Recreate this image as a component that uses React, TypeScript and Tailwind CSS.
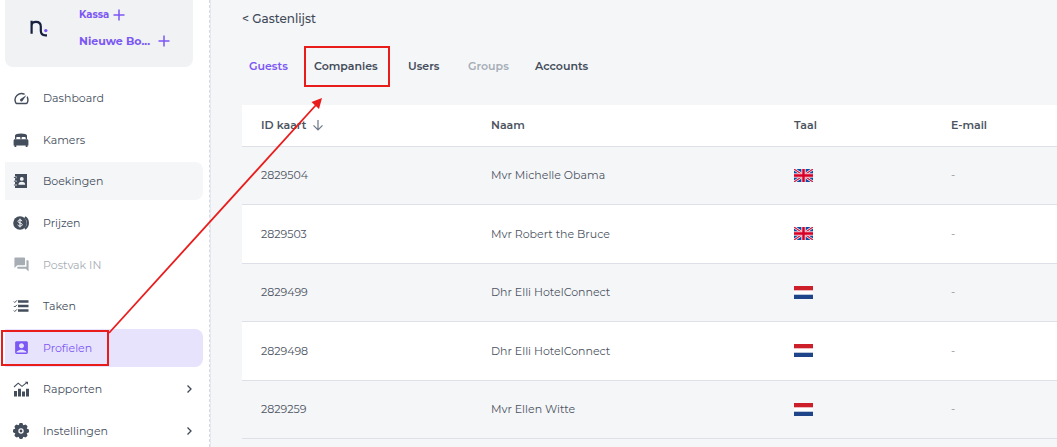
import type { ReactNode } from "react";
import clsx from "clsx";
import { MdAccountBox, MdQuestionAnswer, MdSpeed } from "react-icons/md";

const BedIcon = () => (
  <svg viewBox="0 0 16 16" className="size-4" fill="currentColor" aria-hidden="true">
    <path d="M2 7.300V3.500C2 2.200 4.600 1.500 8 1.500s6 .7 6 2v3.800h-1.300V6c0-.6-.4-1-1-1H9.600c-.6 0-1 .4-1 1v1.300H7.400V6c0-.6-.4-1-1-1H4.300c-.6 0-1 .4-1 1v1.300z" />
    <path d="M2 7.300h12c.8 0 1.400.6 1.400 1.400v4.800h-.9V15h-1.800v-1.500H3.300V15H1.500v-1.500H.6V8.700c0-.8.6-1.400 1.400-1.400z" />
  </svg>
);

const ContactsIcon = () => (
  <svg viewBox="0 0 16 16" className="size-4" fill="currentColor" aria-hidden="true">
    <path
      fillRule="evenodd"
      d="M2 1h12v14H2v-2.200h1.200a.8.8 0 0 0 0-1.600H2V9h1.200a.8.8 0 0 0 0-1.600H2V5.200h1.200a.8.8 0 0 0 0-1.600H2zM8.800 4a1.900 1.900 0 1 0 0 3.800a1.900 1.900 0 0 0 0-3.800zM5.500 11.800h6.600v-.8c0-1.500-2-2.200-3.300-2.200s-3.300.7-3.300 2.200z"
    />
    <path
      d="M1.300 4.400h1.900M1.300 8.200h1.900M1.300 12h1.900"
      stroke="currentColor"
      strokeWidth="1"
      strokeLinecap="round"
    />
  </svg>
);

const CoinsIcon = () => (
  <svg viewBox="0 0 16 16" className="size-4" fill="none" stroke="currentColor" aria-hidden="true">
    <circle cx="7" cy="8" r="6.800" fill="currentColor" stroke="none" />
    <path d="M11.900 2.200a7 7 0 0 1 0 11.600" strokeWidth="2" />
    <path
      d="M9 6.200C8.800 5.300 8 4.900 7 4.900c-1.200 0-2 .6-2 1.500 0 2.200 4.200 1 4.200 3.200 0 .9-.9 1.500-2.200 1.500-1.200 0-2-.5-2.200-1.400M7 3.600v8.800"
      stroke="#fff"
      strokeWidth="1"
    />
  </svg>
);

const TasksIcon = () => (
  <svg viewBox="0 0 16 16" className="size-4" fill="none" stroke="currentColor" aria-hidden="true">
    <path d="M5 3.500H15.500M5 8H15.500M5 12.500H15.500" strokeWidth="2.400" />
    <path d="M.8 3.500l1 1L4 2.300M.8 8l1 1L4 6.800M.8 12.500l1 1L4 11.300" strokeWidth="1" />
  </svg>
);

const ReportsIcon = () => (
  <svg viewBox="0 0 16 16" className="size-4" fill="none" stroke="currentColor" aria-hidden="true">
    <path d="M2.500 15.500V10M6.500 15.500V7.800M10.500 15.500V10.500M14.500 15.500V7.800" strokeWidth="3" />
    <path d="M1 6L5.200 2.200l3.800 3.200 5-4" strokeWidth="1.100" />
    <path d="M11.800 .8H15v3z" fill="currentColor" stroke="none" />
  </svg>
);

const GearIcon = () => (
  <svg viewBox="0 0 16 16" className="size-4" fill="currentColor" aria-hidden="true">
    {[0, 45, 90, 135].map((angle) => (
      <rect key={angle} x="6" y="0" width="4" height="16" rx="1.400" transform={`rotate(${angle} 8 8)`} />
    ))}
    <circle cx="8" cy="8" r="6.500" />
    <circle cx="8" cy="8" r="2.700" fill="#fff" />
    <circle cx="8" cy="8" r="1.400" />
  </svg>
);

const PlusIcon = () => (
  <svg viewBox="0 0 12 12" className="size-3" fill="none" stroke="currentColor" aria-hidden="true">
    <path d="M6 .5v11M.5 6h11" strokeWidth="1.500" />
  </svg>
);

const Chevron = () => (
  <svg viewBox="0 0 8 8" className="size-2" fill="none" stroke="#3f4856" aria-hidden="true">
    <path d="M2.500 .5L6 4 2.500 7.500" strokeWidth="1.300" />
  </svg>
);

const Logo = () => (
  <svg viewBox="0 0 18 17" className="h-[17px] w-[18px]" fill="none" role="img" aria-label="n.">
    <path
      d="M1.600 13.800V.8M1.600 6C1.600 3 3.400 1.800 6 1.800s4.800 1.400 4.800 4.600v4.400c0 3.200 1.700 4.500 4.700 4.500h1.500"
      stroke="#17203f"
      strokeWidth="2.200"
    />
    <circle cx="15.800" cy="10.600" r="1.700" fill="#7b57f5" />
  </svg>
);

type MenuItem = {
  label: string;
  icon: ReactNode;
  state?: "active" | "hover" | "disabled";
  expandable?: boolean;
};

const menu: MenuItem[] = [
  { label: "Dashboard", icon: <MdSpeed /> },
  { label: "Kamers", icon: <BedIcon /> },
  { label: "Boekingen", icon: <ContactsIcon />, state: "hover" },
  { label: "Prijzen", icon: <CoinsIcon /> },
  { label: "Postvak IN", icon: <MdQuestionAnswer />, state: "disabled" },
  { label: "Taken", icon: <TasksIcon /> },
  { label: "Profielen", icon: <MdAccountBox />, state: "active" },
  { label: "Rapporten", icon: <ReportsIcon />, expandable: true },
  { label: "Instellingen", icon: <GearIcon />, expandable: true },
];

const tabs = [
  { label: "Guests", className: "text-[#7b57f5]" },
  { label: "Companies", className: "text-[#434c5a]" },
  { label: "Users", className: "text-[#434c5a]" },
  { label: "Groups", className: "text-[#a6adb7]" },
  { label: "Accounts", className: "text-[#434c5a]" },
];

const guests = [
  { id: "2829504", name: "Mvr Michelle Obama", lang: "en" },
  { id: "2829503", name: "Mvr Robert the Bruce", lang: "en" },
  { id: "2829499", name: "Dhr Elli HotelConnect", lang: "nl" },
  { id: "2829498", name: "Dhr Elli HotelConnect", lang: "nl" },
  { id: "2829259", name: "Mvr Ellen Witte", lang: "nl" },
];

const Flag = ({ lang }: { lang: string }) =>
  lang === "en" ? (
    <svg viewBox="0 0 19 13" className="h-[13px] w-[19px]" role="img" aria-label="English">
      <rect width="19" height="13" fill="#0b4ea8" />
      <path d="M0 0L19 13M19 0L0 13" stroke="#fff" strokeWidth="2.600" />
      <path d="M0 0L19 13M19 0L0 13" stroke="#d8173a" strokeWidth="1.200" />
      <path d="M9.500 0V13M0 6.500H19" stroke="#f6c3cc" strokeWidth="4.600" />
      <path d="M9.500 0V13M0 6.500H19" stroke="#d80027" strokeWidth="2.400" />
    </svg>
  ) : (
    <svg viewBox="0 0 19 13" className="h-[13px] w-[19px]" role="img" aria-label="Nederlands">
      <rect width="19" height="13" fill="#fff" />
      <rect width="19" height="4.300" fill="#cd1f2a" />
      <rect y="8.700" width="19" height="4.300" fill="#1e4589" />
    </svg>
  );

const Sidebar = () => (
  <aside className="w-[210px] shrink-0 border-r border-dashed border-[#d5d9e2] bg-white pl-[5px]">
    <div className="mr-4 flex h-[67px] rounded-b-lg bg-[#f1f2f4] pl-[25px]">
      <div className="w-[49px] pt-5">
        <Logo />
      </div>
      <div className="flex flex-col items-start gap-2.5 pt-[7px] font-bold leading-4 text-[#7b57f5]">
        <button className="flex items-center gap-1 text-[10px] leading-4">
          Kassa <PlusIcon />
        </button>
        <button className="flex items-center gap-2 text-[11px] leading-4">
          Nieuwe Bo... <PlusIcon />
        </button>
      </div>
    </div>
    <nav className="mt-3 mr-1.5 flex min-h-[371px] flex-col justify-between">
      {menu.map((item) => (
        <a
          key={item.label}
          href="#"
          className={clsx(
            "flex h-[38px] items-center rounded-r-lg pl-2 pr-2.5 text-[11px] leading-4",
            item.state === "active" && "bg-[#e8e3fd] text-[#7b57f5]",
            item.state === "hover" && "bg-[#f5f6f8] text-[#434d5c]",
            item.state === "disabled" && "text-[#a6adb5]",
            !item.state && "text-[#434d5c]"
          )}
        >
          <span className="w-[30px] text-[17px]">{item.icon}</span>
          <span className="flex-1">{item.label}</span>
          {item.expandable && <Chevron />}
        </a>
      ))}
    </nav>
  </aside>
);

const GuestTable = () => (
  <table className="w-full table-fixed border-collapse text-left text-[11px] leading-4 text-[#4c5462]">
    <colgroup>
      <col className="w-[230px]" />
      <col className="w-[303px]" />
      <col className="w-[157px]" />
      <col />
    </colgroup>
    <thead>
      <tr className="h-[41px] border-b border-[#dde0e6] bg-white">
        <th className="pl-[19px] font-semibold">
          <button className="flex items-center gap-1.5">
            ID kaart
            <svg viewBox="0 0 12 12" className="size-3" fill="none" stroke="#6c7686" aria-hidden="true">
              <path d="M6 1v9.500M1.500 6.300L6 10.800l4.500-4.500" strokeWidth="1.200" />
            </svg>
          </button>
        </th>
        <th className="pl-[19px] font-semibold">Naam</th>
        <th className="pl-[19px] font-semibold">Taal</th>
        <th className="pl-[19px] font-semibold">E-mail</th>
      </tr>
    </thead>
    <tbody>
      {guests.map((guest) => (
        <tr
          key={guest.id}
          className="border-b border-[#dde0e6] odd:h-[58px] odd:bg-[#f5f6f8] even:h-[59px] even:bg-white"
        >
          <td className="pl-[19px]">{guest.id}</td>
          <td className="pl-[19px]">{guest.name}</td>
          <td className="pl-[19px]">
            <Flag lang={guest.lang} />
          </td>
          <td className="pl-[19px] text-[#8a919d]">-</td>
        </tr>
      ))}
    </tbody>
  </table>
);

// Red boxes and arrow pointing from the menu item to the tab
const Callout = () => (
  <svg
    width="400"
    height="380"
    className="pointer-events-none absolute left-0 top-0"
    fill="none"
    stroke="#e91c1c"
    strokeWidth="2"
    aria-hidden="true"
  >
    <rect x="2" y="331" width="106" height="34" />
    <rect x="305" y="47" width="84" height="39" />
    <path d="M109 333L316 105" strokeWidth="1.800" />
    <path d="M322 98L319 109L311.500 102Z" fill="#e91c1c" stroke="none" />
  </svg>
);

const App = () => {
  return (
    <div className="relative flex h-screen overflow-hidden bg-[#f5f6f8] font-['Montserrat','Inter',sans-serif]">
      <Sidebar />
      <main className="min-w-0 flex-1 border-l border-[#e6e8f0] pl-[31px]">
        <a href="#" className="mt-[11px] block text-[12px] font-medium leading-4 text-[#3f4856]">
          &lt; Gastenlijst
        </a>
        <div className="mb-[31px] mt-[31px] grid w-[360px] grid-cols-[65px_94px_60px_67px_1fr] pl-[7px] text-[11px] font-semibold leading-4">
          {tabs.map((tab) => (
            <button key={tab.label} className={clsx("text-left", tab.className)}>
              {tab.label}
            </button>
          ))}
        </div>
        <GuestTable />
      </main>
      <Callout />
    </div>
  );
};

export default App;
